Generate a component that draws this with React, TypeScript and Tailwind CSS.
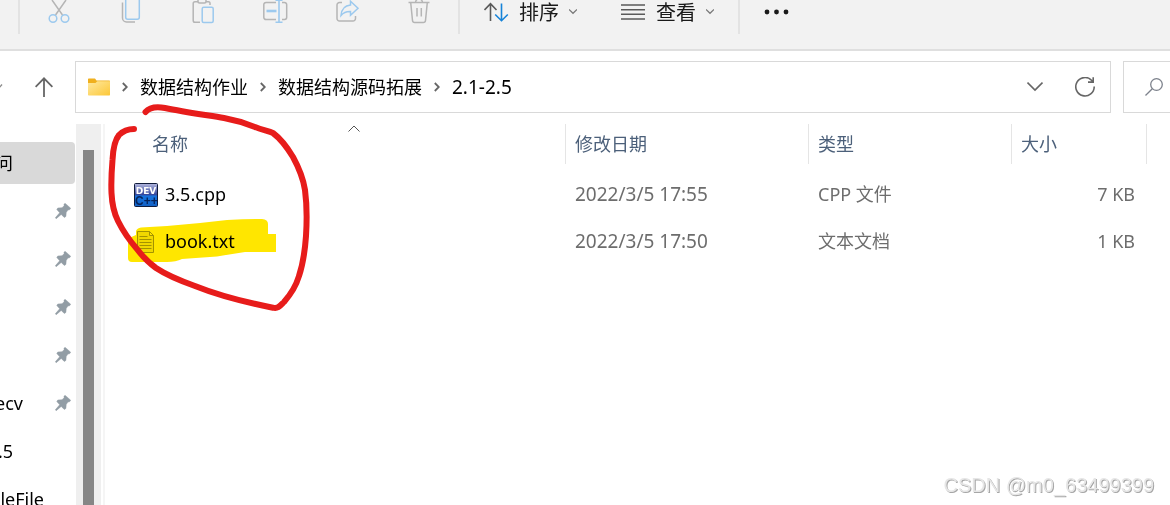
import type { ReactNode } from 'react';

const GRAY = '#b5b5b5';
const BLUE = '#9cc9ee';

const toolbarActions: { label: string; icon: ReactNode }[] = [
  {
    label: '剪切',
    icon: (
      <>
        <path d="M7 0 17.5 15M21 0 10.5 15" stroke={GRAY} />
        <circle cx="8" cy="18.5" r="3.8" stroke={BLUE} />
        <circle cx="20" cy="18.5" r="3.8" stroke={BLUE} />
      </>
    ),
  },
  {
    label: '复制',
    icon: (
      <>
        <path d="M5.5 2.5V18a4 4 0 0 0 4 4H18" stroke={GRAY} />
        <rect x="8.7" y="-2" width="13.6" height="21.3" rx="2" stroke={BLUE} />
      </>
    ),
  },
  {
    label: '粘贴',
    icon: (
      <>
        <path d="M11 22.3H6a1.8 1.8 0 0 1-1.8-1.8v-17A1.8 1.8 0 0 1 6 1.7h3M17 1.7h2.5a1.5 1.5 0 0 1 1.5 1.8V5" stroke={GRAY} />
        <rect x="9" y="-2" width="8" height="5" rx="1.5" stroke={GRAY} />
        <rect x="13.2" y="7.2" width="11" height="15.2" rx="1.5" stroke={BLUE} />
      </>
    ),
  },
  {
    label: '重命名',
    icon: (
      <>
        <path d="M15 2.5H5a2.2 2.2 0 0 0-2.2 2.2v12.6A2.2 2.2 0 0 0 5 19.5h10M21 2.5h2.5a2.2 2.2 0 0 1 2.2 2.2v12.6a2.2 2.2 0 0 1-2.2 2.2H21" stroke={GRAY} />
        <path d="M5.5 11h10" stroke={BLUE} strokeWidth="2.6" />
        <path d="M18 0v22M14.5 22.3h7M14.5 .2h7" stroke={BLUE} strokeWidth="1.6" />
      </>
    ),
  },
  {
    label: '共享',
    icon: (
      <>
        <path d="M9 2.5H6.5A2.5 2.5 0 0 0 4 5v13.5A2.5 2.5 0 0 0 6.500 21h13.5a2.5 2.5 0 0 0 2.5-2.5V16" stroke={GRAY} />
        <path d="M17.5 1.2 25 8.2l-7.5 7V11.5c-4-.2-7 1-9.5 4C8.5 9.5 12 5.500 17.5 5z" stroke={BLUE} />
      </>
    ),
  },
  {
    label: '删除',
    icon: (
      <path
        d="M3.5 2.5h21M5.7 2.5 7.5 20.5a2.2 2.2 0 0 0 2.2 2h8.6a2.2 2.2 0 0 0 2.2-2l1.8-18M10.5 2.5a3.5 3.5 0 0 1 7 0M12 8v8.5M16.3 8v8.5"
        stroke={GRAY}
      />
    ),
  },
];

const sidebarItems = [
  { text: '问', box: 'w-[13px]', active: true, pinned: false },
  { text: '', box: 'w-[13px]', active: false, pinned: true },
  { text: '', box: 'w-[13px]', active: false, pinned: true },
  { text: '', box: 'w-[13px]', active: false, pinned: true },
  { text: '', box: 'w-[13px]', active: false, pinned: true },
  { text: 'ecv', box: 'w-[23px]', active: false, pinned: true },
  { text: '.5', box: 'w-[13px]', active: false, pinned: false },
  { text: 'leFile', box: 'w-[44px]', active: false, pinned: false },
];

const crumbs = [
  { text: '数据结构作业', size: 'text-[18px]' },
  { text: '数据结构源码拓展', size: 'text-[18px]' },
  { text: '2.1-2.5', size: 'text-[19px]' },
];

const files = [
  { name: '3.5.cpp', date: '2022/3/5 17:55', type: 'CPP 文件', size: '7 KB', icon: <DevCppIcon /> },
  { name: 'book.txt', date: '2022/3/5 17:50', type: '文本文档', size: '1 KB', icon: <TextFileIcon /> },
];

function DevCppIcon() {
  return (
    <svg width="24" height="24" viewBox="0 0 24 24" className="shrink-0">
      <defs>
        <linearGradient id="dev" x1="0" y1="0" x2="0" y2="1">
          <stop offset="0" stopColor="#b4b8de" />
          <stop offset=".48" stopColor="#35479c" />
          <stop offset=".55" stopColor="#1673de" />
          <stop offset="1" stopColor="#1260c4" />
        </linearGradient>
      </defs>
      <rect x=".5" y=".5" width="23" height="23" rx="1" fill="url(#dev)" stroke="#101c3c" />
      <text x="1" y="22" fontSize="12" fontWeight="700" fill="#06235a" fontFamily="Liberation Sans, sans-serif">C++</text>
      <text x="12" y="11" textAnchor="middle" fontSize="9" fontWeight="700" fill="#fff" fontFamily="DejaVu Sans, sans-serif">DEV</text>
    </svg>
  );
}

function TextFileIcon() {
  return (
    <svg width="24" height="24" viewBox="0 0 24 24" fill="none" stroke="#a3a398" className="shrink-0">
      <path d="M3.5 1.500h12l4 4v17h-16zM15.5 1.5v4h4" fill="#f0f0f0" />
      <path d="M5.5 6.5h8M5.5 9.5h12M5.5 12.5h12M5.5 15.5h12M5.5 18.5h12" />
    </svg>
  );
}

function PinIcon() {
  return (
    <svg width="16" height="16" viewBox="0 0 16 16" fill="#929da5" stroke="#929da5" strokeWidth=".5" className="shrink-0">
      <path d="M10.3.4 15.7 5.3 14.5 6.8 12.9 7 11.2 9.5 10.900 13.4 9.3 14.5 6.2 11.400 1.2 15.7.3 14.8 4.7 9.8 1.8 6.5 2.8 5 7 4.8 9.100 2.7 9 1z" />
    </svg>
  );
}

function SmallChevron() {
  return (
    <svg width="8" height="24" viewBox="0 0 8 24" fill="none" stroke="#777" strokeWidth="1.2">
      <path d="M0 9.5 4 13.3 8 9.5" />
    </svg>
  );
}

function Toolbar() {
  return (
    <div className="flex h-[51px] shrink-0 items-start border-b-2 border-[#dfdfdf] bg-[#f2f2f2] text-[20px] leading-[26px] text-[#1a1a1a]">
      <div className="mr-[3px] ml-[18px] h-[34px] w-[2px] bg-[#e3e3e3]" />
      {toolbarActions.map((action) => (
        <button key={action.label} aria-label={action.label} className="flex h-6 w-[72px] justify-center">
          <svg width="28" height="24" viewBox="0 0 28 24" fill="none" strokeWidth="1.5">
            {action.icon}
          </svg>
        </button>
      ))}
      <div className="mr-6 ml-[3px] h-[34px] w-[2px] bg-[#e3e3e3]" />
      <button className="flex items-start gap-[10px]">
        <svg width="25" height="24" viewBox="0 0 25 24" fill="none" strokeWidth="1.6">
          <path d="M6.500 21V4M.5 10 6.5 3.7l6 6.3" stroke="#5a5a5a" />
          <path d="M17.5 3.5v17M11.2 14.5l6.3 6.2 6.3-6.2" stroke="#1683d8" />
        </svg>
        <span>排序</span>
        <SmallChevron />
      </button>
      <button className="ml-11 flex items-start gap-[10px]">
        <svg width="25" height="24" viewBox="0 0 25 24" fill="none" stroke="#5a5a5a" strokeWidth="1.4">
          <path d="M0 5h24M0 9.7h24M0 14.3h24M0 19h24" />
        </svg>
        <span>查看</span>
        <SmallChevron />
      </button>
      <div className="mx-6 h-[34px] w-[2px] bg-[#e3e3e3]" />
      <button aria-label="更多" className="h-6">
        <svg width="25" height="24" viewBox="0 0 25 24" fill="#1a1a1a">
          <circle cx="3" cy="12" r="2.4" />
          <circle cx="12.5" cy="12" r="2.4" />
          <circle cx="22" cy="12" r="2.4" />
        </svg>
      </button>
    </div>
  );
}

function AddressBar() {
  return (
    <div className="flex h-[73px] shrink-0 items-start pt-[10px]">
      <div className="flex h-[52px] w-[75px] shrink-0 items-center">
        <svg width="3" height="10" viewBox="0 0 3 10" fill="none" stroke="#8a8a8a" strokeWidth="1.3">
          <path d="M-2 7 2 2.5" />
        </svg>
        <button aria-label="上移" className="ml-8">
          <svg width="18" height="20" viewBox="0 0 18 20" fill="none" stroke="#666" strokeWidth="1.8">
            <path d="M9 20V1.5M.6 9.8 9 1.3l8.4 8.5" />
          </svg>
        </button>
      </div>
      <nav className="flex h-[52px] min-w-0 flex-1 items-center gap-3 border border-[#d9d9d9] px-3 whitespace-nowrap text-black">
        <svg width="22" height="18" viewBox="0 0 22 18" className="shrink-0">
          <defs>
            <linearGradient id="folder" x1="0" y1="0" x2="1" y2="1">
              <stop offset="0" stopColor="#ffe9a0" />
              <stop offset="1" stopColor="#fcc737" />
            </linearGradient>
          </defs>
          <path d="M0 1.2Q0 .5.7.5H7l1.5 2h12.800q.7 0 .7.700V8H0z" fill="#f0b01e" />
          <path d="M0 5h7.500l1.8-1.7H22v13.500q0 .7-.7.7H.7q-.7 0-.7-.7z" fill="url(#folder)" />
        </svg>
        {crumbs.map((crumb) => (
          <div key={crumb.text} className="flex items-center gap-3">
            <svg width="6" height="10" viewBox="0 0 6 10" fill="none" stroke="#666" strokeWidth="1.8">
              <path d="M.8 1 4.8 5 .8 9" />
            </svg>
            <a href="#" className={crumb.size}>{crumb.text}</a>
          </div>
        ))}
        <div className="ml-auto flex items-center gap-8 pr-[3px]">
          <button aria-label="历史记录">
            <svg width="16" height="20" viewBox="0 0 16 20" fill="none" stroke="#666" strokeWidth="1.6">
              <path d="M.5 5.500 8 13l7.5-7.5" />
            </svg>
          </button>
          <button aria-label="刷新">
            <svg width="20" height="20" viewBox="0 0 20 20" fill="none" stroke="#666" strokeWidth="1.6">
              <path d="M19.2 9.500A9.200 9.2 0 1 1 16.500 3.200L18 4.800M18.2 .3V5.100H13" />
            </svg>
          </button>
        </div>
      </nav>
      <button aria-label="搜索" className="ml-3 flex h-[52px] w-[47px] shrink-0 items-center border border-r-0 border-[#d9d9d9] pl-[21px]">
        <svg width="18" height="18" viewBox="0 0 18 18" fill="none" stroke="#7d828c" strokeWidth="1.3">
          <circle cx="11.5" cy="6.5" r="5.8" />
          <path d="M7.3 10.7.5 17.5" />
        </svg>
      </button>
    </div>
  );
}

function Sidebar() {
  return (
    <aside className="w-[76px] shrink-0 overflow-hidden pt-[15px] pr-px">
      <ul className="text-[18px] text-black">
        {sidebarItems.map((item, i) => (
          <li key={i} className="flex h-12 items-center">
            <div className={`flex h-[42px] flex-1 items-center justify-between rounded-r-sm pr-1 ${item.active ? 'bg-[#d9d9d9]' : ''}`}>
              <span className={`flex shrink-0 justify-end whitespace-nowrap ${item.box}`}>{item.text}</span>
              {item.pinned && <PinIcon />}
            </div>
          </li>
        ))}
      </ul>
    </aside>
  );
}

function FileTable() {
  return (
    <table className="w-full table-fixed self-start text-left text-[18px] text-[#6d6d6d]">
      <thead className="text-[#4c607a]">
        <tr className="h-[47px] align-top">
          <th className="p-0 font-normal">
            <div className="relative ml-[37px] flex h-10 items-center border-r border-[#e5e5e5] pl-[10px]">
              名称
              <svg width="12" height="7" viewBox="0 0 12 7" fill="none" stroke="#555" className="absolute top-px left-1/2 -translate-x-1/2">
                <path d="M.5 6.500 6 1l5.5 5.5" />
              </svg>
            </div>
          </th>
          <th className="w-[243px] p-0 font-normal">
            <div className="flex h-10 items-center border-r border-[#e5e5e5] pl-[9px]">修改日期</div>
          </th>
          <th className="w-[203px] p-0 font-normal">
            <div className="flex h-10 items-center border-r border-[#e5e5e5] pl-[9px]">类型</div>
          </th>
          <th className="w-[135px] p-0 font-normal">
            <div className="flex h-10 items-center border-r border-[#e5e5e5] pl-[9px]">大小</div>
          </th>
          <td className="w-[23px] p-0" />
        </tr>
      </thead>
      <tbody>
        {files.map((file) => (
          <tr key={file.name} className="h-[47px]">
            <td className="p-0 pl-[29px]">
              <div className="flex items-center gap-[7px] text-black">
                {file.icon}
                {file.name}
              </div>
            </td>
            <td className="p-0 pl-[9px] text-[19px]">{file.date}</td>
            <td className="p-0 pl-[9px]">{file.type}</td>
            <td className="p-0 pr-3 text-right">{file.size}</td>
            <td className="p-0" />
          </tr>
        ))}
      </tbody>
    </table>
  );
}

// Marker and pen strokes drawn over the file list
function Annotations() {
  return (
    <>
      <svg width="320" height="320" viewBox="0 0 320 320" className="pointer-events-none absolute top-0 left-0 mix-blend-multiply">
        <path
          d="M128 239q0-1 8-4l0-4q1-3 5-3.500L167 226l33-3 27-3q20-1 35-1 6 .5 6 5V234h8v18h-31q-14 2-28 4.500-18 1-35 2.500-6 3-15 3h-35q-4 0-4-4z"
          fill="#ffe600"
        />
      </svg>
      <svg width="320" height="320" viewBox="0 0 320 320" className="pointer-events-none absolute top-0 left-0">
        <path
          d="M134 129C127 129 123 131 119 135C114 141 113 150 112.500 160C111.500 172 111 182 111.500 193C112 204 114 213 118 221C123 231 130 241 137 249C143 257 149 263 156 268C165 274 181 281 195 286C215 294 244 302 273 307.700C278 309 280 306 284 302C291 294 296 286 299 276C303 264 305 250 306 236C307 220 307 205 305 190C303 177 299 168 293 157C287 147 281 139 273 133C268 131 262 130 255 127C245 123 235 120 224 118C206 115 184 112 165 108C155 106 149 108 145.500 112"
          fill="none"
          stroke="#e71c1b"
          strokeWidth="6"
          strokeLinecap="round"
          strokeLinejoin="round"
        />
      </svg>
    </>
  );
}

export default function App() {
  return (
    <div className="relative flex h-screen flex-col overflow-hidden bg-white font-['Noto_Sans','Noto_Sans_CJK_SC',sans-serif]">
      <Toolbar />
      <AddressBar />
      <main className="flex min-h-0 flex-1">
        <Sidebar />
        <div className="flex w-[25px] shrink-0 justify-center bg-[#efefef] pt-[26px]">
          <div className="w-[11px] bg-[#868686]" />
        </div>
        <div className="ml-[2px] w-[2px] shrink-0 bg-[#f5f5f5]" />
        <FileTable />
      </main>
      <Annotations />
      <p className="absolute right-4 bottom-2 font-['Liberation_Sans',sans-serif] text-[20px] leading-6 text-[#e6e6e6] [text-shadow:1px_1px_0_#a6a6a6]">
        CSDN @m0_63499399
      </p>
    </div>
  );
}
